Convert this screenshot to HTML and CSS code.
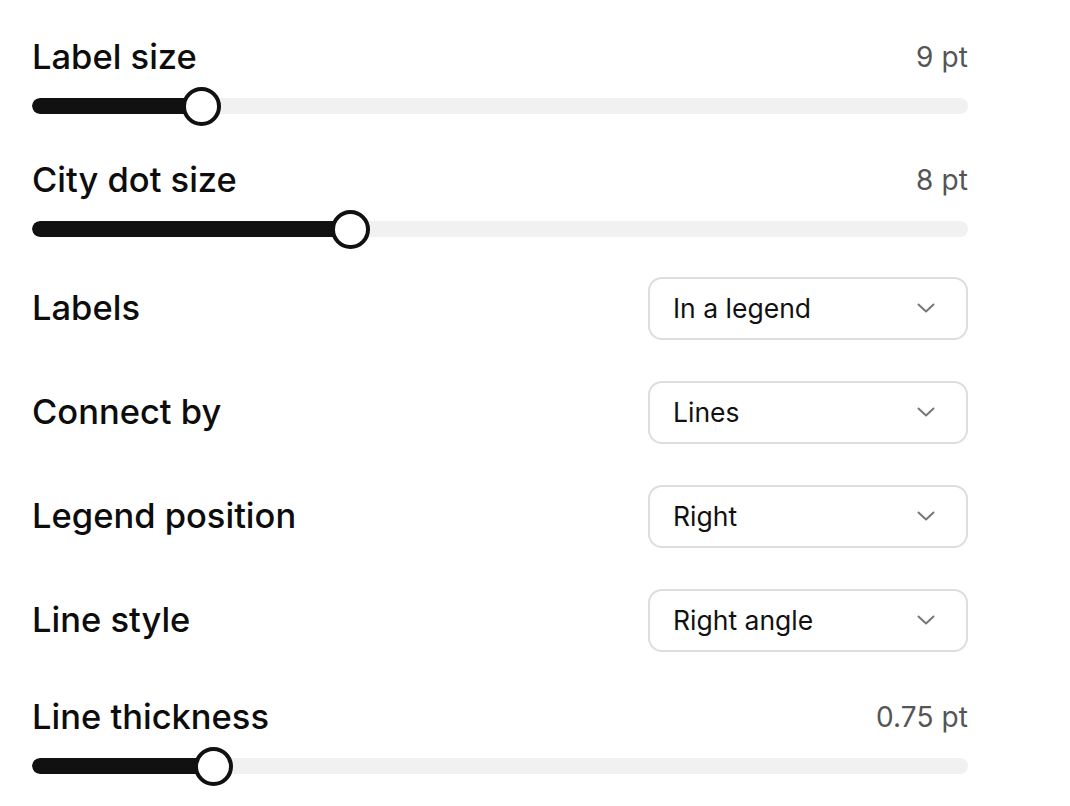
FILE: index.html
```html
<!DOCTYPE html>
<html>
<head>
<meta charset="utf-8">
<link rel="stylesheet" href="styles.css">
</head>
<body>
<div class="panel">
  <div class="slider-row first">
    <div class="row-head"><span class="label">Label size</span><span class="value">9 pt</span></div>
    <div class="slider"><div class="track"><div class="fill" style="width:169px"></div></div><div class="thumb" style="left:150px"></div></div>
  </div>
  <div class="slider-row second">
    <div class="row-head"><span class="label">City dot size</span><span class="value">8 pt</span></div>
    <div class="slider"><div class="track"><div class="fill" style="width:318px"></div></div><div class="thumb" style="left:299px"></div></div>
  </div>
  <div class="select-row first-select">
    <span class="label">Labels</span>
    <div class="select"><span>In a legend</span><svg class="chev" width="18" height="10" viewBox="0 0 18 10"><path d="M1.5 1.5 L9 8.5 L16.5 1.5" fill="none" stroke="#777" stroke-width="2" stroke-linecap="round" stroke-linejoin="round"/></svg></div>
  </div>
  <div class="select-row">
    <span class="label">Connect by</span>
    <div class="select"><span>Lines</span><svg class="chev" width="18" height="10" viewBox="0 0 18 10"><path d="M1.5 1.5 L9 8.5 L16.5 1.5" fill="none" stroke="#777" stroke-width="2" stroke-linecap="round" stroke-linejoin="round"/></svg></div>
  </div>
  <div class="select-row">
    <span class="label">Legend position</span>
    <div class="select"><span>Right</span><svg class="chev" width="18" height="10" viewBox="0 0 18 10"><path d="M1.5 1.5 L9 8.5 L16.5 1.5" fill="none" stroke="#777" stroke-width="2" stroke-linecap="round" stroke-linejoin="round"/></svg></div>
  </div>
  <div class="select-row">
    <span class="label">Line style</span>
    <div class="select"><span>Right angle</span><svg class="chev" width="18" height="10" viewBox="0 0 18 10"><path d="M1.5 1.5 L9 8.5 L16.5 1.5" fill="none" stroke="#777" stroke-width="2" stroke-linecap="round" stroke-linejoin="round"/></svg></div>
  </div>
  <div class="slider-row last">
    <div class="row-head"><span class="label">Line thickness</span><span class="value">0.75 pt</span></div>
    <div class="slider"><div class="track"><div class="fill" style="width:181px"></div></div><div class="thumb" style="left:162px"></div></div>
  </div>
</div>
</body>
</html>
```

FILE: styles.css
```css
html, body {
  margin: 0;
  padding: 0;
  background: #fff;
}
body {
  font-family: Inter, "Noto Sans", sans-serif;
  color: #111;
  width: 1070px;
  height: 806px;
  overflow: hidden;
}
.panel {
  width: 936px;
  padding: 37px 0 0 32px;
  display: flex;
  flex-direction: column;
}
.label {
  font-size: 34.5px;
  font-weight: 500;
  letter-spacing: 0;
  color: #0d0d0d;
  line-height: 40px;
}
.row-head {
  display: flex;
  justify-content: space-between;
  align-items: center;
  height: 40px;
}
.value {
  font-size: 28px;
  color: #555;
  letter-spacing: 0.1px;
  line-height: 40px;
}
.slider {
  position: relative;
  height: 38px;
  margin-top: 10px;
  display: flex;
  align-items: center;
}
.track {
  width: 100%;
  height: 16px;
  border-radius: 8px;
  background: #f1f1f1;
  overflow: hidden;
}
.fill {
  height: 100%;
  background: #111;
  border-radius: 8px 0 0 8px;
}
.thumb {
  position: absolute;
  top: 0;
  width: 39px;
  height: 39px;
  margin-top: -0.5px;
  box-sizing: border-box;
  border: 4px solid #111;
  border-radius: 50%;
  background: #fff;
}
.slider-row.second { margin-top: 35px; }
.slider-row.last { margin-top: 46px; }
.select-row {
  display: flex;
  justify-content: space-between;
  align-items: center;
  height: 62px;
  margin-top: 42px;
}
.select-row.first-select { margin-top: 29px; }
.select {
  width: 320px;
  height: 63px;
  box-sizing: border-box;
  border: 2px solid #dedede;
  border-radius: 14px;
  display: flex;
  align-items: center;
  justify-content: space-between;
  padding: 0 31px 0 23px;
  font-size: 26.5px;
  letter-spacing: 0;
  color: #111;
}
.chev { display: block; }
```
